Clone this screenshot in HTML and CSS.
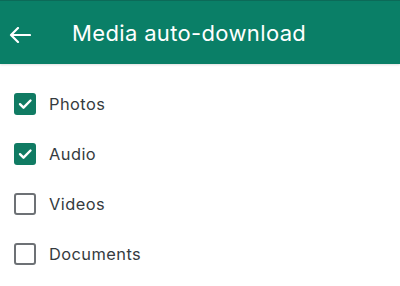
FILE: index.html
```html
<!DOCTYPE html>
<html>
<head>
<meta charset="utf-8">
<link rel="stylesheet" href="styles.css">
</head>
<body>
<header class="bar">
  <svg class="back" width="22" height="16" viewBox="0 0 22 16"><path d="M21 8H2M9 1L2 8l7 7" fill="none" stroke="#fff" stroke-width="2.2" stroke-linecap="round" stroke-linejoin="round"/></svg>
  <h1 class="title">Media auto-download</h1>
</header>
<ul class="list">
  <li class="row"><span class="box on"><svg width="22" height="22" viewBox="0 0 22 22"><path d="M6 11.2l3.5 3.5L16.5 7.5" fill="none" stroke="#fff" stroke-width="2.4" stroke-linecap="round" stroke-linejoin="round"/></svg></span><span class="label">Photos</span></li>
  <li class="row"><span class="box on"><svg width="22" height="22" viewBox="0 0 22 22"><path d="M6 11.2l3.5 3.5L16.5 7.5" fill="none" stroke="#fff" stroke-width="2.4" stroke-linecap="round" stroke-linejoin="round"/></svg></span><span class="label">Audio</span></li>
  <li class="row"><span class="box"></span><span class="label">Videos</span></li>
  <li class="row"><span class="box"></span><span class="label">Documents</span></li>
</ul>
</body>
</html>
```
FILE: styles.css
```css
html, body { margin: 0; padding: 0; background: #fff; }
body { font-family: Inter, Roboto, "Liberation Sans", sans-serif; width: 400px; height: 286px; overflow: hidden; }
.bar {
  height: 64px;
  background: #0a7f67;
  display: flex;
  align-items: center;
  box-shadow: 0 1px 2px rgba(0,0,0,0.12);
  border-top: 1px solid #0c6a58;
  box-sizing: border-box;
}
.back { margin-left: 9px; margin-top: 4px; }
.title {
  margin: 0 0 0 41px;
  color: #fff;
  font-weight: 400;
  font-size: 22px;
  letter-spacing: 0.35px;
  margin-top: 1px;
}
.list { list-style: none; margin: 0; padding: 15px 0 0 14px; }
.row { height: 50px; display: flex; align-items: center; }
.box {
  width: 22px; height: 22px;
  box-sizing: border-box;
  border: 2.5px solid #6d7175;
  border-radius: 3px;
  display: flex;
}
.box.on { background: #107b63; border: none; }
.label { margin-left: 13px; font-size: 16.4px; letter-spacing: 0.45px; color: #353b40; }
```
